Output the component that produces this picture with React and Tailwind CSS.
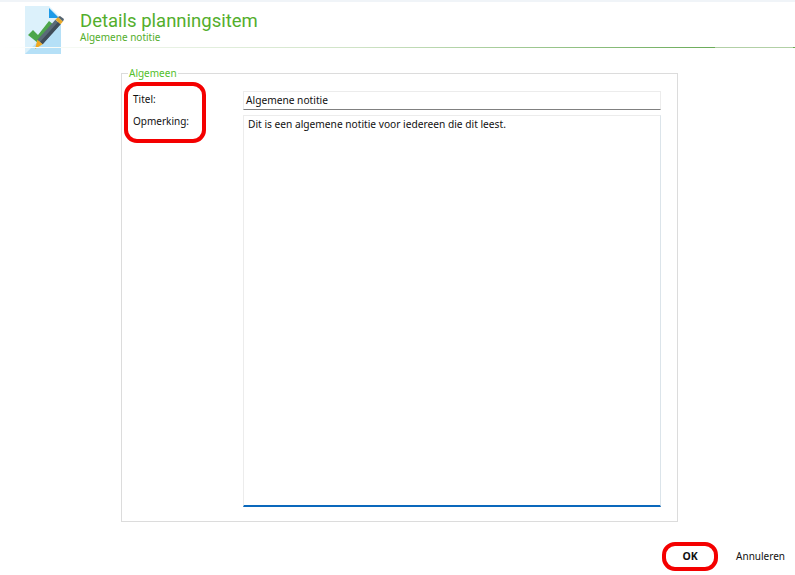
import React from "react";

const FONT = { fontFamily: '"Noto Sans", "Open Sans", sans-serif' };
const TITLE_FONT = { fontFamily: 'Roboto, "Noto Sans", sans-serif' };

const PlanIcon = () => (
  <svg width="36" height="48" viewBox="0 0 36 48" className="shrink-0 overflow-visible">
    <path d="M0 0H24L36 12V48H0Z" fill="#dcf1fb" />
    <path d="M0 48L36 13V48Z" fill="#b5e0f7" />
    <path d="M24 2L34 12H24Z" fill="#1e9be8" />
    <path d="M3 29L8 24L13 29L24 15L29 19L13 37Z" fill="#4ca64a" />
    <path d="M12.4 33.7L30.4 13.7L35.6 18.3L17.6 38.3Z" fill="#5a6b78" />
    <path d="M15 36L33 16L35.6 18.3L17.6 38.3Z" fill="#3f4d59" />
    <path d="M30.4 13.7L33 11L38 15.5L35.6 18.3Z" fill="#e9a92a" />
    <path d="M33 11L35 10L39 13L38 15.5Z" fill="#55646f" />
    <path d="M12.4 33.7L17.6 38.3L10 43Z" fill="#f0a820" />
  </svg>
);

export default function App() {
  return (
    <div className="relative w-[795px] h-[575px] bg-white overflow-hidden text-[10px] text-[#111]" style={FONT}>
      <div className="h-[2px] bg-[#f0f4f8]" />

      {/* header */}
      <div className="relative h-[46px]">
        <div className="flex pl-[25px] pt-[4px] gap-[19px]">
          <PlanIcon />
          <div className="pt-[5px]">
            <div className="text-[18.5px] leading-[20px] text-[#53ae2c]" style={TITLE_FONT}>Details planningsitem</div>
            <div className="text-[10px] leading-[12px] text-[#53ae2c]">Algemene notitie</div>
          </div>
        </div>
        <div className="absolute left-0 top-[45px] flex w-[795px] h-[1px]">
          <div className="w-[715px] bg-gradient-to-r from-white via-[#cfe3c6] to-[#6aab58]" />
          <div className="w-[78px] bg-[#b2d0a6]" />
          <div className="w-[2px] bg-[#6aab58]" />
        </div>
      </div>

      {/* fieldset */}
      <div className="relative ml-[121px] mt-[25px] w-[557px] h-[449px] border border-[#dcdcdc] pl-[11px] pr-[16px] pt-[17px]">
        <div className="absolute left-[6px] top-[-7px] bg-white px-px text-[10px] leading-[13px] text-[#53c02c]">Algemeen</div>
        <div className="flex">
          <div className="w-[110px]">
            <div className="h-[19px] leading-[16px]">Titel:</div>
            <div className="leading-[16px] mt-[3px]">Opmerking:</div>
          </div>
          <div className="w-[418px] text-[10.2px]">
            <div className="h-[19px] border border-[#ececec] border-b-[#808080] pl-[2px] leading-[17px]">Algemene notitie</div>
            <div className="mt-[5px] h-[392px] border border-[#ececec] border-r-[#dbe4ea] border-b-2 border-b-[#0a68bc] pl-[4px] pt-[1px] leading-[15px]">
              Dit is een algemene notitie voor iedereen die dit leest.
            </div>
          </div>
        </div>
      </div>

      {/* buttons */}
      <div className="flex justify-end items-center mt-[20px] pr-[10px] h-[29px]">
        <button className="w-[56px] h-[29px] rounded-[13px] border-4 border-[#f40000] font-bold text-[10.5px] text-[#111]">OK</button>
        <button className="ml-[18px] text-[10px] text-[#111]">Annuleren</button>
      </div>

      {/* red annotation */}
      <div className="absolute left-[124px] top-[82px] w-[82px] h-[61px] rounded-[13px] border-4 border-[#f40000]" />
    </div>
  );
}
